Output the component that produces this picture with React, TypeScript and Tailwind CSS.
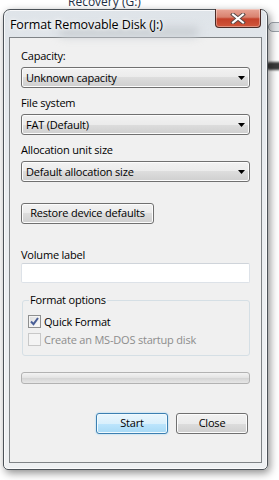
import React from 'react';

const font = "font-['Open_Sans',sans-serif] tracking-[-0.2px]";

const Combo = ({ value }: { value: string }) => (
  <div className="h-[21px] w-[229px] rounded-[3px] border border-[#707070] flex items-center justify-between pl-[4px] pr-[4px] bg-[linear-gradient(#f2f2f2_0%,#ebebeb_50%,#dddddd_50%,#cfcfcf_100%)] shadow-[inset_0_0_0_1px_#fcfcfc]">
    <span className="text-[11px] leading-[15px] text-black">{value}</span>
    <svg width="7" height="4" viewBox="0 0 7 4">
      <path d="M0 0H7L3.5 4Z" fill="#000" />
    </svg>
  </div>
);

const Label = ({ children, className = '' }: { children: React.ReactNode; className?: string }) => (
  <div className={`h-[16px] text-[11px] leading-[16px] text-black ${className}`}>{children}</div>
);

const Check = ({ checked, disabled, label }: { checked?: boolean; disabled?: boolean; label: string }) => (
  <div className="flex items-center h-[13px] gap-[3px]">
    <div
      className={`w-[13px] h-[13px] border flex items-center justify-center ${
        disabled
          ? 'border-[#c8c8c8] bg-[#f4f4f4]'
          : 'border-[#8e8f8f] bg-[linear-gradient(135deg,#dcdcdc,#fefefe)] shadow-[inset_0_0_0_1px_#f4f4f4]'
      }`}
    >
      {checked && (
        <svg width="9" height="9" viewBox="0 0 9 9">
          <path d="M1 4.5L3.5 7.2L8 1" stroke="#4a5f97" strokeWidth="2" fill="none" />
        </svg>
      )}
    </div>
    <span className={`text-[11px] leading-[15px] ${disabled ? 'text-[#8d8d8d]' : 'text-black'}`}>{label}</span>
  </div>
);

const PushButton = ({ label, primary }: { label: string; primary?: boolean }) => (
  <div
    className={`h-[21px] w-[72px] rounded-[3px] border flex items-center justify-center text-[11px] text-black ${
      primary
        ? 'border-[#3c7fb1] bg-[linear-gradient(#eaf6fd_0%,#d9f0fc_50%,#bee6fd_50%,#a7d9f5_100%)] shadow-[inset_0_0_0_1px_#f0fafe,0_0_2px_#8fd0f5]'
        : 'border-[#707070] bg-[linear-gradient(#f2f2f2_0%,#ebebeb_50%,#dddddd_50%,#cfcfcf_100%)] shadow-[inset_0_0_0_1px_#fcfcfc]'
    }`}
  >
    {label}
  </div>
);

export default function App() {
  return (
    <div className={`relative w-[279px] h-[480px] overflow-hidden bg-white ${font}`}>
      {/* desktop behind the dialog */}
      <div className="absolute left-[68px] top-[-6px] text-[12px] leading-[15px] tracking-normal text-[#1e2f45]">Recovery (G:)</div>
      <div className="absolute left-[268px] top-[22px] w-[20px] h-[10px] rounded-full border border-[#9aa0a8] bg-[#e2e5e8] blur-[0.5px]" />
      <div className="absolute left-[266px] top-[62px] w-[20px] h-[8px] rounded-full bg-[#3a3a3a] blur-[1px]" />

      <div className="pl-[3px] pt-[9px]">
        <div className="relative w-[265px] h-[461px] rounded-t-[7px] rounded-b-[5px] border border-[#4c5258] bg-[linear-gradient(#dfe4e9,#eaedf0_40%,#eef0f2)] shadow-[2px_3px_8px_rgba(0,0,0,0.45),inset_0_0_0_1px_rgba(255,255,255,0.75)] flex flex-col">
          {/* title bar */}
          <div className="relative h-[27px] flex items-center pl-[6px]">
            <div className="absolute left-[55px] top-[17px] w-[140px] h-[10px] rounded-full bg-[#c9ced3] blur-[4px]" />
            <span className="relative text-[12.5px] leading-[16px] tracking-[-0.1px] text-black mt-[2px] [text-shadow:0_0_6px_#fff,0_0_3px_#fff]">
              Format Removable Disk (J:)
            </span>
            <div className="absolute right-[6px] top-[-1px] w-[46px] h-[19px] rounded-b-[4px] border border-[#4a2a25] border-t-0 bg-[linear-gradient(#e8a596_0%,#d9826f_45%,#c4412a_55%,#d0573c_100%)] shadow-[inset_0_0_0_1px_rgba(255,255,255,0.35)] flex items-center justify-center">
              <svg width="16" height="11" viewBox="0 0 16 11">
                <path d="M3 1.5L13 9.5M13 1.5L3 9.5" stroke="#5a4a48" strokeWidth="4" strokeLinecap="square" />
                <path d="M3 1.5L13 9.5M13 1.5L3 9.5" stroke="#ffffff" strokeWidth="2" strokeLinecap="square" />
              </svg>
            </div>
          </div>

          {/* client area */}
          <div className="mx-[5px] w-[253px] h-[426px] border border-[#7f8386] bg-[#f0f0f0] pl-[11px] pt-[10px] flex flex-col">
            <Label>Capacity:</Label>
            <div className="mt-[3px]"><Combo value="Unknown capacity" /></div>
            <Label className="mt-[7px]">File system</Label>
            <div className="mt-[3px]"><Combo value="FAT (Default)" /></div>
            <Label className="mt-[7px]">Allocation unit size</Label>
            <div className="mt-[3px]"><Combo value="Default allocation size" /></div>

            <div className="mt-[21px] h-[21px] w-[133px] rounded-[3px] border border-[#707070] flex items-center justify-center text-[11px] text-black bg-[linear-gradient(#f2f2f2_0%,#ebebeb_50%,#dddddd_50%,#cfcfcf_100%)] shadow-[inset_0_0_0_1px_#fcfcfc]">
              Restore device defaults
            </div>

            <Label className="mt-[23px]">Volume label</Label>
            <div className="mt-0 h-[20px] w-[229px] rounded-[2px] border border-[#dde2e8] border-t-[#cfd4da] bg-white" />

            <div className="relative mt-[17px] ml-[1px] w-[228px] rounded-[3px] border border-[#d5dfe5] pt-[14px] pb-[9px] pl-[5px] flex flex-col gap-[5px]">
              <span className="absolute left-[6px] top-[-9px] px-[1px] bg-[#f0f0f0] text-[11px] leading-[16px] text-black">Format options</span>
              <Check checked label="Quick Format" />
              <Check disabled label="Create an MS-DOS startup disk" />
            </div>

            <div className="mt-[16px] h-[12px] w-[229px] rounded-[3px] border border-[#b2b2b2] bg-[linear-gradient(#f3f3f3,#e4e4e4_45%,#d6d6d6_55%,#e6e6e6)]" />

            <div className="mt-[29px] w-[229px] flex justify-end gap-[8px] pr-[2px]">
              <PushButton primary label="Start" />
              <PushButton label="Close" />
            </div>
          </div>
        </div>
      </div>
    </div>
  );
}
